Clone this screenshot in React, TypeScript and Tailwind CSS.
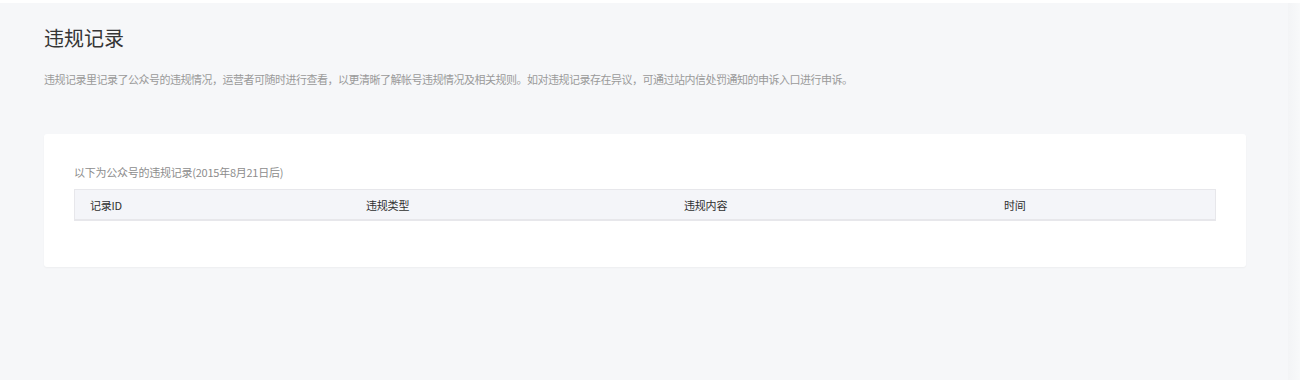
const columns = ["记录ID", "违规类型", "违规内容", "时间"];

const App = () => {
  return (
    <div className="h-[380px] w-full flex flex-col bg-[#f6f7f9] font-['Noto_Sans_CJK_SC',sans-serif] overflow-hidden">
      {/* top strip */}
      <div className="h-[3px] bg-white" />

      <div className="flex flex-1">
        {/* main page */}
        <main className="flex-1 pl-[44px] pr-[42px] pt-[21px]">
          <h2 className="text-[20px] leading-[28px] text-[#353535] font-normal">违规记录</h2>
          <p className="mt-[19px] text-[11px] leading-[16px] tracking-[-0.5px] text-[#9a9a9a]">
            违规记录里记录了公众号的违规情况，运营者可随时进行查看，以更清晰了解帐号违规情况及相关规则。如对违规记录存在异议，可通过站内信处罚通知的申诉入口进行申诉。
          </p>

          {/* records card */}
          <section className="mt-[47px] bg-white rounded-[3px] shadow-[0_1px_2px_rgba(0,0,0,0.04)] px-[30px] pt-[30px] pb-[46px]">
            <p className="text-[11px] leading-[16px] tracking-[-0.25px] text-[#8d8d8d]">以下为公众号的违规记录(2015年8月21日后)</p>
            <div className="mt-[9px] grid grid-cols-[276px_318px_320px_1fr] h-[32px] bg-[#f4f5f9] border border-[#e7e7eb] border-b-2 items-center">
              {columns.map((col) => (
                <div key={col} className="pl-[15px] text-[11px] leading-[16px] tracking-[-0.2px] text-[#2f2f2f]">
                  {col}
                </div>
              ))}
            </div>
          </section>
        </main>

        {/* right scroll gutter */}
        <div className="w-[12px] bg-gradient-to-r from-[#f3f4f6] to-[#f8f9fa]" />
      </div>
    </div>
  );
};

export default App;
